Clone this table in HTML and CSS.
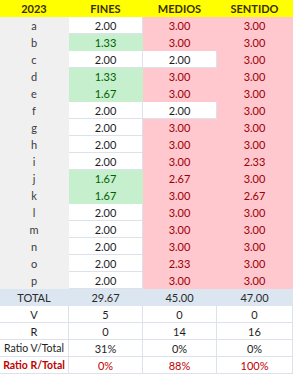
FILE: index.html
```html
<!DOCTYPE html>
<html>
<head>
<meta charset="utf-8">
<link rel="stylesheet" href="styles.css">
</head>
<body>
<div class="sheet">
  <div class="c hd">2023</div><div class="c hd">FINES</div><div class="c hd">MEDIOS</div><div class="c hd">SENTIDO</div>

  <div class="c lab">a</div><div class="c w">2.00</div><div class="c p">3.00</div><div class="c p">3.00</div>
  <div class="c lab">b</div><div class="c g">1.33</div><div class="c p">3.00</div><div class="c p">3.00</div>
  <div class="c lab">c</div><div class="c w">2.00</div><div class="c w">2.00</div><div class="c p">3.00</div>
  <div class="c lab">d</div><div class="c g">1.33</div><div class="c p">3.00</div><div class="c p">3.00</div>
  <div class="c lab">e</div><div class="c g">1.67</div><div class="c p">3.00</div><div class="c p">3.00</div>
  <div class="c lab">f</div><div class="c w">2.00</div><div class="c w">2.00</div><div class="c p">3.00</div>
  <div class="c lab">g</div><div class="c w">2.00</div><div class="c p">3.00</div><div class="c p">3.00</div>
  <div class="c lab">h</div><div class="c w">2.00</div><div class="c p">3.00</div><div class="c p">3.00</div>
  <div class="c lab">i</div><div class="c w">2.00</div><div class="c p">3.00</div><div class="c p">2.33</div>
  <div class="c lab">j</div><div class="c g">1.67</div><div class="c p">2.67</div><div class="c p">3.00</div>
  <div class="c lab">k</div><div class="c g">1.67</div><div class="c p">3.00</div><div class="c p">2.67</div>
  <div class="c lab">l</div><div class="c w">2.00</div><div class="c p">3.00</div><div class="c p">3.00</div>
  <div class="c lab">m</div><div class="c w">2.00</div><div class="c p">3.00</div><div class="c p">3.00</div>
  <div class="c lab">n</div><div class="c w">2.00</div><div class="c p">3.00</div><div class="c p">3.00</div>
  <div class="c lab">o</div><div class="c w">2.00</div><div class="c p">2.33</div><div class="c p">3.00</div>
  <div class="c lab">p</div><div class="c w">2.00</div><div class="c p">3.00</div><div class="c p">3.00</div>

  <div class="c tot">TOTAL</div><div class="c tot">29.67</div><div class="c tot">45.00</div><div class="c tot">47.00</div>

  <div class="c w">V</div><div class="c w">5</div><div class="c w">0</div><div class="c w">0</div>
  <div class="c w">R</div><div class="c w">0</div><div class="c w">14</div><div class="c w">16</div>
  <div class="c w small">Ratio V/Total</div><div class="c w">31%</div><div class="c w">0%</div><div class="c w">0%</div>
  <div class="c w small red b">Ratio R/Total</div><div class="c w red">0%</div><div class="c w red">88%</div><div class="c w red">100%</div>
</div>
</body>
</html>
```

FILE: styles.css
```css
html, body {
  margin: 0;
  padding: 0;
  background: #ffffff;
}

.sheet {
  display: grid;
  grid-template-columns: 69px 74px 74px 76px;
  grid-auto-rows: 17px;
  width: 293px;
  font-family: Lato, "Open Sans", "Liberation Sans", sans-serif;
  font-size: 11px;
}

.c {
  display: flex;
  align-items: center;
  justify-content: center;
  box-sizing: border-box;
  border-right: 1px solid transparent;
  border-bottom: 1px solid transparent;
  line-height: 1;
  white-space: nowrap;
}

.hd {
  background: #ffff00;
  border-color: #ffff00;
  font-weight: bold;
  color: #3a2e08;
}

.lab {
  background: #f0f0f0;
  border-color: #f0f0f0;
  color: #3a3a3a;
}

.w {
  background: #ffffff;
  border-color: #dde2ea;
  color: #1e1e1e;
}

.g {
  background: #c6efce;
  border-color: #c6efce;
  color: #006100;
}

.p {
  background: #ffc7ce;
  border-color: #ffc7ce;
  color: #9c0006;
}

.tot {
  background: #dce6f1;
  border-color: #dce6f1;
  color: #2a2a2a;
}

.small {
  font-size: 10.5px;
}

.red {
  color: #c00000;
}

.b {
  font-weight: bold;
}
```
